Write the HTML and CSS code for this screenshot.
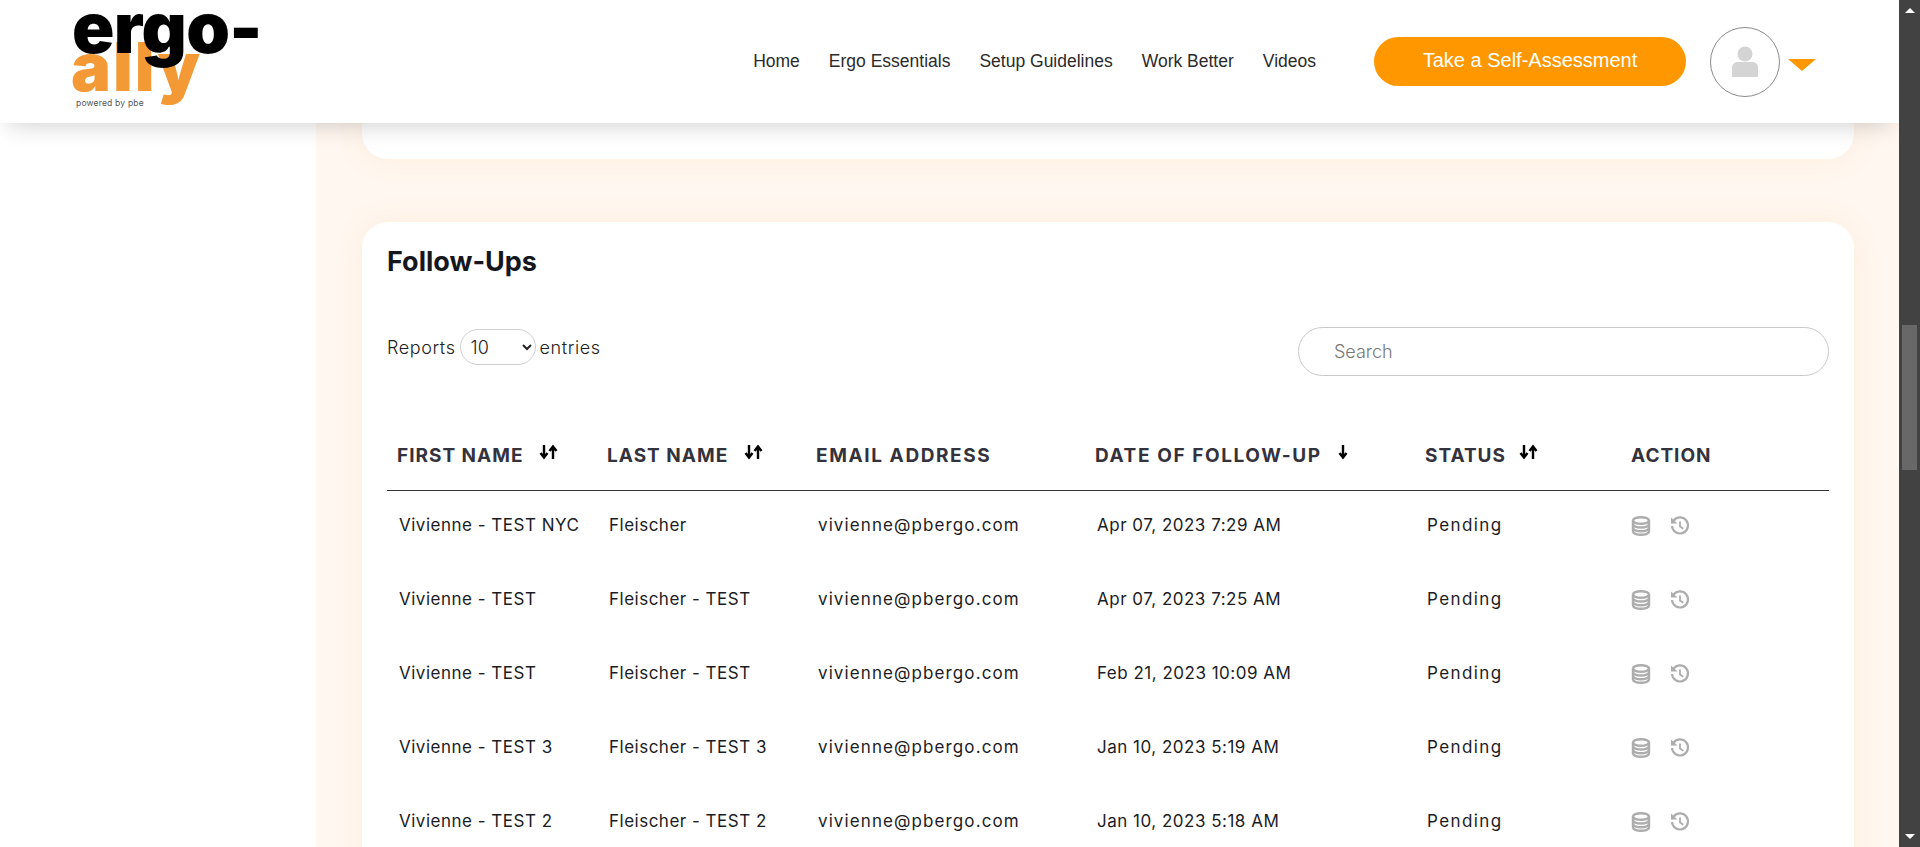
FILE: index.html
```html
<!DOCTYPE html>
<html>
<head>
  <title>Follow-Ups</title>
  <link rel="stylesheet" href="styles.css">
</head>
<body>

<svg class="sprites" width="0" height="0">
  <symbol id="sort-both" viewBox="0 0 19 16">
    <path d="M5 1v12M1.500 9 5 13.500 8.500 9" fill="none" stroke="currentColor" stroke-width="2.400"/>
    <path d="M14 15V3M10.500 7 14 2.500 17.500 7" fill="none" stroke="currentColor" stroke-width="2.400"/>
  </symbol>
  <symbol id="sort-down" viewBox="0 0 10 16">
    <path d="M5 1v12M1.500 9 5 13.500 8.500 9" fill="none" stroke="currentColor" stroke-width="2.400"/>
  </symbol>
  <symbol id="icon-db" viewBox="0 0 20 20">
    <g fill="none" stroke="currentColor" stroke-width="2.400">
      <ellipse cx="10" cy="4.500" rx="8" ry="3.300"/>
      <path d="M2 4.500v11c0 1.800 3.600 3.300 8 3.300s8-1.500 8-3.300v-11"/>
      <path d="M2 8.200c0 1.800 3.600 3.300 8 3.300s8-1.500 8-3.300M2 12c0 1.800 3.600 3.300 8 3.300s8-1.500 8-3.300"/>
    </g>
  </symbol>
  <symbol id="icon-history" viewBox="0 0 20 20">
    <g fill="none" stroke="currentColor" stroke-width="2.200">
      <path d="M3.200 5.200A8 8 0 1 1 2 10"/>
      <path d="M10 5.500V10.500l3.300 2.300" stroke-width="1.800"/>
    </g>
    <path d="M1 1.500 7.500 7.500H1z" fill="currentColor"/>
  </symbol>
</svg>

<div class="window">
  <div class="viewport">
    <header class="topbar">
      <a class="logo" href="#">
        <span class="logo-ally">ally</span>
        <span class="logo-ergo">ergo-</span>
        <span class="logo-by">powered by pbe</span>
      </a>
      <nav class="nav">
        <a href="#">Home</a>
        <a href="#">Ergo Essentials</a>
        <a href="#">Setup Guidelines</a>
        <a href="#">Work Better</a>
        <a href="#">Videos</a>
      </nav>
      <a class="cta" href="#">Take a Self-Assessment</a>
      <div class="avatar">
        <svg width="26" height="32" viewBox="0 0 26 32">
          <circle cx="13" cy="8" r="7.500" fill="#d4d4d4"/>
          <path d="M0 30v-9c0-3 3-5 6-5h14c3 0 6 2 6 5v9c0 .600-.500 1-1 1H1c-.500 0-1-.400-1-1z" fill="#d4d4d4"/>
        </svg>
      </div>
      <span class="caret"></span>
    </header>

    <div class="page">
      <aside class="side"></aside>
      <main class="content">
        <section class="card card-top"></section>

        <section class="card card-follow">
          <h2>Follow-Ups</h2>
          <div class="tools">
            <label class="length">Reports
              <select>
                <option>10</option>
                <option>25</option>
                <option>50</option>
              </select>
              entries</label>
            <input class="search" type="text" placeholder="Search">
          </div>

          <table class="grid">
            <thead>
              <tr>
                <th class="c1">FIRST NAME <svg class="sort" width="19" height="16"><use href="#sort-both"/></svg></th>
                <th class="c2">LAST NAME <svg class="sort" width="19" height="16"><use href="#sort-both"/></svg></th>
                <th class="c3">EMAIL ADDRESS</th>
                <th class="c4">DATE OF FOLLOW-UP <svg class="sort" width="10" height="16"><use href="#sort-down"/></svg></th>
                <th class="c5">STATUS <svg class="sort" width="19" height="16"><use href="#sort-both"/></svg></th>
                <th class="c6">ACTION</th>
              </tr>
            </thead>
            <tbody>
              <tr>
                <td>Vivienne - TEST NYC</td><td>Fleischer</td><td>vivienne@pbergo.com</td><td>Apr 07, 2023 7:29 AM</td><td>Pending</td>
                <td class="acts"><svg class="ic" width="20" height="20"><use href="#icon-db"/></svg><svg class="ic" width="20" height="20"><use href="#icon-history"/></svg></td>
              </tr>
              <tr>
                <td>Vivienne - TEST</td><td>Fleischer - TEST</td><td>vivienne@pbergo.com</td><td>Apr 07, 2023 7:25 AM</td><td>Pending</td>
                <td class="acts"><svg class="ic" width="20" height="20"><use href="#icon-db"/></svg><svg class="ic" width="20" height="20"><use href="#icon-history"/></svg></td>
              </tr>
              <tr>
                <td>Vivienne - TEST</td><td>Fleischer - TEST</td><td>vivienne@pbergo.com</td><td>Feb 21, 2023 10:09 AM</td><td>Pending</td>
                <td class="acts"><svg class="ic" width="20" height="20"><use href="#icon-db"/></svg><svg class="ic" width="20" height="20"><use href="#icon-history"/></svg></td>
              </tr>
              <tr>
                <td>Vivienne - TEST 3</td><td>Fleischer - TEST 3</td><td>vivienne@pbergo.com</td><td>Jan 10, 2023 5:19 AM</td><td>Pending</td>
                <td class="acts"><svg class="ic" width="20" height="20"><use href="#icon-db"/></svg><svg class="ic" width="20" height="20"><use href="#icon-history"/></svg></td>
              </tr>
              <tr>
                <td>Vivienne - TEST 2</td><td>Fleischer - TEST 2</td><td>vivienne@pbergo.com</td><td>Jan 10, 2023 5:18 AM</td><td>Pending</td>
                <td class="acts"><svg class="ic" width="20" height="20"><use href="#icon-db"/></svg><svg class="ic" width="20" height="20"><use href="#icon-history"/></svg></td>
              </tr>
            </tbody>
          </table>
        </section>
      </main>
    </div>
  </div>

  <div class="scrollbar">
    <span class="arrow-up"></span>
    <div class="track"><div class="thumb"></div></div>
    <span class="arrow-down"></span>
  </div>
</div>

</body>
</html>
```

FILE: styles.css
```css
* { box-sizing: border-box; }
html, body { margin: 0; height: 100%; overflow: hidden; }
body { background: #fff; font-family: Inter, "Open Sans", sans-serif; color: #1c1c24; }
a { text-decoration: none; color: inherit; }
.sprites { position: absolute; }

.window { display: flex; height: 847px; }
.viewport { flex: 1; min-width: 0; display: flex; flex-direction: column; overflow: hidden; }

/* top bar */
.topbar {
  position: relative;
  z-index: 2;
  flex: none;
  height: 123px;
  display: flex;
  align-items: center;
  padding: 0 83px 0 72px;
  background: #fff;
  box-shadow: 0 8px 24px -8px rgba(0, 0, 0, .22);
  font-family: "Liberation Sans", Arial, sans-serif;
}
.logo { position: relative; display: block; width: 190px; height: 123px; color: #000; font-family: Inter, sans-serif; }
.logo-ergo { position: absolute; left: 0; top: 3px; font-size: 70px; line-height: 50px; font-weight: 900; letter-spacing: -.6px; }
.logo-ally { position: absolute; left: -1px; top: 42px; font-size: 67px; line-height: 50px; font-weight: 900; color: #f39a37; letter-spacing: 2px; }
.logo-by { position: absolute; left: 4px; top: 97px; font-size: 8.500px; line-height: 12px; color: #555; letter-spacing: .2px; }

.nav { display: flex; gap: 29px; margin-left: auto; font-size: 17.500px; color: #2b2b2b; }
.cta {
  margin-left: 58px;
  width: 312px;
  height: 49px;
  line-height: 47px;
  text-align: center;
  border-radius: 25px;
  background: #ff9800;
  color: #fff;
  font-size: 20px;
}
.avatar {
  width: 70px;
  height: 70px;
  margin-left: 24px;
  border: 1px solid #8a8a8a;
  border-radius: 50%;
  display: flex;
  align-items: center;
  justify-content: center;
}
.caret {
  width: 0;
  height: 0;
  margin: 6px 0 0 8px;
  border-left: 14px solid transparent;
  border-right: 14px solid transparent;
  border-top: 12px solid #ff9800;
}

/* page */
.page { flex: 1; display: flex; min-height: 0; }
.side { width: 316px; flex: none; background: #fff; }
.content { flex: 1; padding: 0 45px 0 46px; background: #fff7f0; }
.card { background: #fff; border-radius: 26px; box-shadow: 0 0 30px rgba(255, 160, 70, .1); }
.card-top { height: 36px; margin-bottom: 63px; border-radius: 0 0 26px 26px; }
.card-follow { padding: 0 25px 120px; }
.card-follow h2 { margin: 0; padding-top: 24px; font-size: 27px; line-height: 32px; font-weight: 700; color: #16161d; }

.tools { display: flex; justify-content: space-between; align-items: flex-start; margin-top: 51px; }
.length { display: flex; align-items: center; gap: 4px; height: 36px; font-size: 18px; font-weight: 300; color: #222; letter-spacing: .6px; }
.length select {
  width: 76px;
  height: 36px;
  padding: 0 6px;
  background: #fff;
  border: 1px solid #cfcfcf;
  border-radius: 18px;
  font: inherit;
  color: #222;
}
.search {
  width: 531px;
  height: 49px;
  margin-top: -2px;
  padding: 0 35px;
  border: 1px solid #c9c9c9;
  border-radius: 25px;
  font: 300 18px Inter, sans-serif;
  outline: none;
}
.search::placeholder { color: #777; }

/* table */
.grid { width: 1442px; margin-top: 45px; table-layout: fixed; border-collapse: collapse; }
.c1 { width: 210px; }
.c2 { width: 209px; }
.c3 { width: 279px; }
.c4 { width: 330px; }
.c5 { width: 206px; }
.c6 { width: 208px; }
.grid th {
  height: 69px;
  padding: 0 10px;
  text-align: left;
  font-size: 19px;
  font-weight: 700;
  color: #33323d;
  letter-spacing: 1px;
  border-bottom: 1px solid #333;
  white-space: nowrap;
}
.grid th.c3, .grid th.c4 { letter-spacing: 1.600px; }
.grid td { height: 74px; padding: 0 12px; font-size: 17px; color: #1c1c24; white-space: nowrap; letter-spacing: .5px; }
.grid td:nth-child(3) { letter-spacing: 1.100px; }
.grid td:nth-child(5) { letter-spacing: 1.400px; }
.grid tbody tr:first-child td { height: 72px; padding-bottom: 2px; }
.sort { margin-left: 10px; color: #000; vertical-align: 2px; }
.c5 .sort { margin-left: 8px; }
.grid td.acts { padding-left: 10px; }
.ic { display: inline-block; margin-right: 19px; color: #adadad; vertical-align: -5px; }

/* scrollbar */
.scrollbar { width: 21px; flex: none; display: flex; flex-direction: column; align-items: center; background: #424242; }
.arrow-up, .arrow-down { width: 0; height: 0; flex: none; border-left: 5px solid transparent; border-right: 5px solid transparent; }
.arrow-up { margin-top: 8px; border-bottom: 5px solid #fff; }
.arrow-down { margin-bottom: 8px; border-top: 5px solid #fff; }
.track { flex: 1; width: 100%; padding: 312px 3px 0 3px; }
.thumb { height: 145px; background: #686868; }
```
